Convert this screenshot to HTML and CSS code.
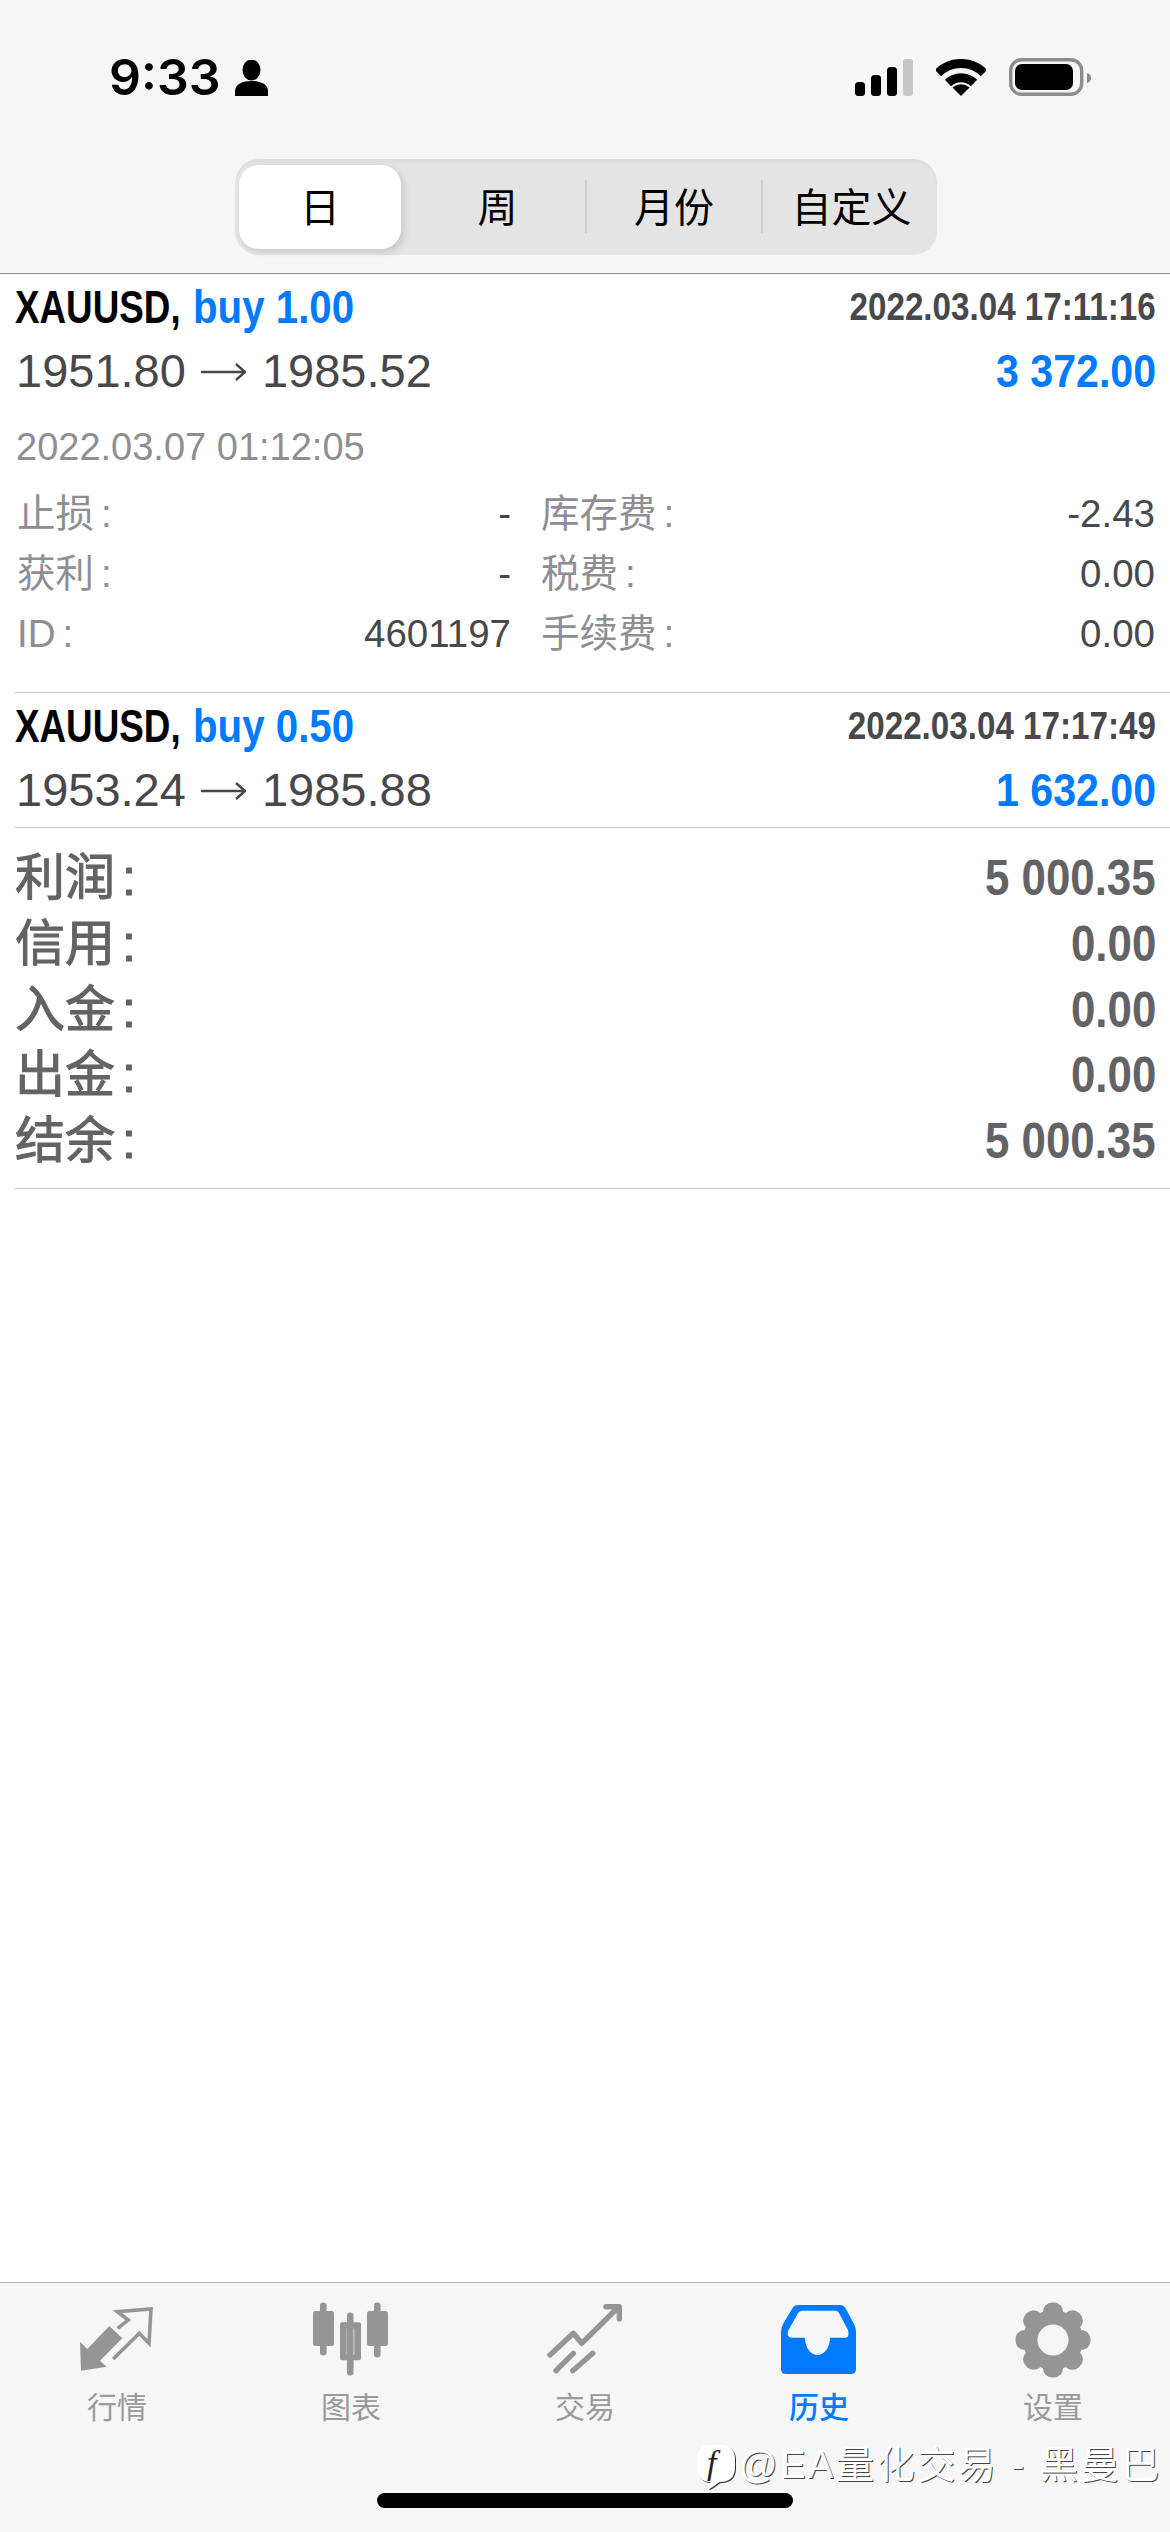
FILE: index.html
```html
<!DOCTYPE html>
<html>
<head>
  <title>历史</title>
  <link rel="stylesheet" href="styles.css">
</head>
<body>

<header class="top">
  <div class="status">
    <div class="status-left">
      <span class="clock">9:33</span>
      <svg class="person" width="33" height="36" viewBox="0 0 33 36">
        <ellipse cx="16.5" cy="10" rx="9" ry="10.5"/>
        <path d="M0 36V31C0 24 8 21 16.5 21S33 24 33 31V36Z"/>
      </svg>
    </div>
    <div class="status-right">
      <svg width="58" height="37" viewBox="0 0 58 37">
        <rect x="0" y="23" width="10" height="14" rx="3.5"/>
        <rect x="16" y="16" width="10" height="21" rx="3.5"/>
        <rect x="32" y="8" width="10" height="29" rx="3.5"/>
        <rect x="48" y="0" width="10" height="37" rx="3" fill="#c6c6c6"/>
      </svg>
      <svg width="50" height="37" viewBox="0 0 50 37">
        <path d="M2 14A32.5 32.5 0 0 1 48 14" fill="none" stroke="#000" stroke-width="9"/>
        <path d="M12 24A18.5 18.5 0 0 1 38 24" fill="none" stroke="#000" stroke-width="9"/>
        <path d="M25 37L16.5 28.5Q25 22 33.5 28.5Z"/>
      </svg>
      <svg width="82" height="38" viewBox="0 0 82 38">
        <rect x="1.7" y="1.7" width="71" height="34.6" rx="11" fill="none" stroke="#8c8c8c" stroke-width="3.4"/>
        <rect x="6" y="6" width="58" height="26" rx="7"/>
        <path d="M78 15Q82 16 82 20T78 25Z" fill="#8c8c8c"/>
      </svg>
    </div>
  </div>

  <div class="segment">
    <div class="seg-item seg-active">日</div>
    <div class="seg-item seg-week">周</div>
    <div class="seg-item seg-month">月份</div>
    <div class="seg-item seg-custom">自定义</div>
  </div>
</header>

<main class="list">
  <section class="trade">
    <div class="line">
      <div class="title"><span class="symbol">XAUUSD,</span><span class="side">buy 1.00</span></div>
      <span class="open-time">2022.03.04 17:11:16</span>
    </div>
    <div class="line">
      <span class="price">1951.80<svg class="arrow" width="45" height="18" viewBox="0 0 45 18"><path d="M0 9H44M35 1L44 9L35 17" fill="none" stroke="#48484a" stroke-width="2.4"/></svg>1985.52</span>
      <span class="profit">3 372.00</span>
    </div>
    <div class="close-time">2022.03.07 01:12:05</div>
    <div class="details">
      <div class="pair"><span class="key">止损<span class="colon">:</span></span><span>-</span></div>
      <div class="pair"><span class="key">库存费<span class="colon">:</span></span><span>-2.43</span></div>
      <div class="pair"><span class="key">获利<span class="colon">:</span></span><span>-</span></div>
      <div class="pair"><span class="key">税费<span class="colon">:</span></span><span>0.00</span></div>
      <div class="pair"><span class="key">ID<span class="colon">:</span></span><span>4601197</span></div>
      <div class="pair"><span class="key">手续费<span class="colon">:</span></span><span>0.00</span></div>
    </div>
  </section>

  <section class="trade trade-short">
    <div class="line">
      <div class="title"><span class="symbol">XAUUSD,</span><span class="side">buy 0.50</span></div>
      <span class="open-time">2022.03.04 17:17:49</span>
    </div>
    <div class="line">
      <span class="price">1953.24<svg class="arrow" width="45" height="18" viewBox="0 0 45 18"><path d="M0 9H44M35 1L44 9L35 17" fill="none" stroke="#48484a" stroke-width="2.4"/></svg>1985.88</span>
      <span class="profit">1 632.00</span>
    </div>
  </section>

  <section class="summary">
    <div class="sum-row"><span class="sum-key">利润<span class="colon">:</span></span><span class="sum-val">5 000.35</span></div>
    <div class="sum-row"><span class="sum-key">信用<span class="colon">:</span></span><span class="sum-val">0.00</span></div>
    <div class="sum-row"><span class="sum-key">入金<span class="colon">:</span></span><span class="sum-val">0.00</span></div>
    <div class="sum-row"><span class="sum-key">出金<span class="colon">:</span></span><span class="sum-val">0.00</span></div>
    <div class="sum-row"><span class="sum-key">结余<span class="colon">:</span></span><span class="sum-val">5 000.35</span></div>
  </section>
</main>

<footer class="tabbar">
  <nav class="tabs">
    <div class="tab">
      <svg width="90" height="80" viewBox="0 0 90 80">
        <path d="M8 41.7L15.3 49L37.3 26L50.3 38.3L28 60.7L34.7 66.7L9 70.7Z" fill="#959595"/>
        <path d="M45.7 28.3L56.3 20L45.3 11.7L79 9L77 43.3L67.3 33.3L41.3 59" fill="none" stroke="#959595" stroke-width="3.6"/>
      </svg>
      <span>行情</span>
    </div>
    <div class="tab">
      <svg width="90" height="80" viewBox="0 0 90 80" fill="#959595">
        <rect x="14" y="2.5" width="6.6" height="53" rx="3.3"/>
        <rect x="7" y="11" width="21" height="35" rx="2.5"/>
        <rect x="41" y="12.5" width="6.6" height="63" rx="3.3"/>
        <path fill-rule="evenodd" d="M36 22.3H53Q55 22.3 55 24.3V58.3Q55 60.3 53 60.3H36Q34 60.3 34 58.3V24.3Q34 22.3 36 22.3ZM41.5 28.3Q40.7 28.3 40.7 29.3V54Q40.7 55 41.5 55H47.5Q48.3 55 48.3 54V29.3Q48.3 28.3 47.5 28.3Z"/>
        <rect x="68" y="2.5" width="6.6" height="55" rx="3.3"/>
        <rect x="61" y="11" width="21" height="35" rx="2.5"/>
      </svg>
      <span>图表</span>
    </div>
    <div class="tab">
      <svg width="90" height="80" viewBox="0 0 90 80" fill="none" stroke="#959595" stroke-width="5.4" stroke-linecap="round" stroke-linejoin="round">
        <path d="M10 55L33.3 33.3L41.7 43.3L78 7.5"/>
        <path d="M66 6.7H79.3V19"/>
        <path d="M16 70.7L33.3 53.3"/>
        <path d="M32.7 70.7L52.7 53.3"/>
      </svg>
      <span>交易</span>
    </div>
    <div class="tab tab-active">
      <svg width="90" height="80" viewBox="0 0 90 80">
        <path fill="#007aff" fill-rule="evenodd" d="M24 5H66Q70 5 72 9L80 24Q82 28 82 32V69Q82 74 77 74H12Q7 74 7 69V32Q7 28 9 24L18 9Q20 5 24 5ZM29 10.7Q25 10.7 23.5 14L14 31Q12.5 37.7 18 37.7H31C31 48 37 55 43.5 55C50 55 56 48 56 37.7H71Q76 37.7 74 30L65.5 14Q64 10.7 61 10.7Z"/>
      </svg>
      <span>历史</span>
    </div>
    <div class="tab">
      <svg width="90" height="80" viewBox="-45 -40 90 80" fill="#959595">
        <circle r="30"/>
        <rect x="-10" y="-37.5" width="20" height="75" rx="9"/>
        <rect x="-10" y="-37.5" width="20" height="75" rx="9" transform="rotate(45)"/>
        <rect x="-10" y="-37.5" width="20" height="75" rx="9" transform="rotate(90)"/>
        <rect x="-10" y="-37.5" width="20" height="75" rx="9" transform="rotate(135)"/>
        <circle r="15.5" fill="#f6f6f6"/>
      </svg>
      <span>设置</span>
    </div>
  </nav>
  <div class="home-bar"></div>
</footer>

<div class="watermark">
  <svg width="40" height="46" viewBox="0 0 40 46">
    <path d="M14 1H26C34 1 39 7 39 14V24C39 33 33 38 25 38C21 38 18 44 12 45C14 42 15 39 14 38C6 38 1 32 1 24V14C1 7 6 1 14 1Z" fill="#333" transform="translate(1 1)"/>
    <path d="M14 1H26C34 1 39 7 39 14V24C39 33 33 38 25 38C21 38 18 44 12 45C14 42 15 39 14 38C6 38 1 32 1 24V14C1 7 6 1 14 1Z" fill="#fff"/>
    <text x="11" y="30" class="wm-f">f</text>
  </svg>
  <span class="wm-text">@EA量化交易 - 黑曼巴</span>
</div>

</body>
</html>
```

FILE: styles.css
```css
body {
  margin: 0;
  width: 1170px;
  height: 2532px;
  position: relative;
  overflow: hidden;
  display: flex;
  flex-direction: column;
  background: #fff;
  color: #48484a;
  font-family: "Liberation Sans", "Noto Sans CJK SC", sans-serif;
}

/* top area */
.top {
  height: 273px;
  background: #f6f6f6;
  border-bottom: 1px solid #8e8e8e;
  overflow: hidden;
}

.status {
  display: flex;
  justify-content: space-between;
  align-items: center;
  height: 38px;
  margin-top: 58px;
  padding: 0 79px 0 109px;
  color: #000;
}

.status-left {
  display: flex;
  align-items: center;
  gap: 14px;
}

.clock {
  font-family: Inter, sans-serif;
  font-size: 50px;
  font-weight: 600;
  line-height: 38px;
}

.person {
  margin-top: 2px;
}

.status-right {
  display: flex;
  align-items: center;
  gap: 23px;
}

.segment {
  display: flex;
  width: 702px;
  height: 96px;
  box-sizing: border-box;
  margin: 63px 0 0 235px;
  padding: 6px 4px;
  background: #e4e4e4;
  border-radius: 24px;
  box-shadow: inset 0 3px 3px rgba(0, 0, 0, 0.03);
}

.seg-item {
  display: flex;
  align-items: center;
  justify-content: center;
  box-sizing: border-box;
  padding-bottom: 5px;
  font-size: 40px;
  color: #000;
  position: relative;
}

.seg-active {
  width: 162px;
  background: #fff;
  border-radius: 20px;
  box-shadow: 3px 3px 7px rgba(0, 0, 0, 0.12);
}

.seg-week {
  width: 185px;
  padding-left: 8px;
}

.seg-month {
  width: 176px;
}

.seg-custom {
  width: 171px;
  padding-left: 8px;
}

.seg-month::before,
.seg-month::after {
  content: "";
  position: absolute;
  top: 15px;
  height: 53px;
  width: 2px;
  background: #cfcfcf;
}

.seg-month::before {
  left: -1px;
}

.seg-month::after {
  right: -1px;
}

/* trades */
.list {
  flex: 1;
}

.trade {
  margin-left: 15px;
  padding: 2px 14px 28px 0;
  border-bottom: 1px solid #c8c8c8;
}

.trade-short {
  padding-bottom: 6px;
}

.line {
  display: flex;
  justify-content: space-between;
  align-items: baseline;
  height: 63px;
  line-height: 63px;
}

/* no condensed bold is installed, so the bold text is squeezed */
.symbol,
.side,
.open-time,
.profit,
.sum-val {
  display: inline-block;
  font-weight: 700;
  white-space: nowrap;
}

.open-time,
.profit,
.sum-val {
  transform-origin: right center;
}

.symbol,
.side {
  font-size: 46px;
  transform-origin: left center;
}

.symbol {
  width: 178px;
  color: #000;
  transform: scaleX(0.8);
}

.side {
  color: #007aff;
  transform: scaleX(0.875);
}

.open-time {
  align-self: flex-start;
  font-size: 38px;
  line-height: 62px;
  transform: scaleX(0.873);
}

.price {
  display: flex;
  align-items: center;
  font-size: 47px;
  padding-left: 1px;
}

.arrow {
  margin: 2px 16px 0 15px;
}

.profit {
  font-size: 46px;
  color: #007aff;
  transform: scaleX(0.894);
}

.close-time {
  margin-top: 15px;
  padding-left: 1px;
  font-size: 38px;
  line-height: 60px;
  color: #8e8e93;
}

.details {
  display: grid;
  grid-template-columns: 494px 614px;
  column-gap: 30px;
  margin-top: 7px;
  padding-left: 2px;
  font-size: 38.5px;
  line-height: 60px;
}

.pair {
  display: flex;
  justify-content: space-between;
}

.key {
  color: #8e8e93;
}

.colon {
  margin-left: 7px;
}

.summary {
  margin-left: 15px;
  padding: 18px 14px 13px 0;
  border-bottom: 1px solid #c8c8c8;
  color: #636366;
}

.sum-row {
  display: flex;
  justify-content: space-between;
  height: 65.75px;
  line-height: 65.75px;
  font-size: 50px;
}

.sum-key {
  -webkit-text-stroke: 1px #636366;
}

.sum-val {
  transform: scaleX(0.877);
}

/* bottom tabs */
.tabbar {
  height: 249px;
  background: #f6f6f6;
  border-top: 1px solid #b4b4b4;
}

.tabs {
  display: grid;
  grid-template-columns: repeat(5, 1fr);
  padding-top: 17px;
}

.tab {
  display: flex;
  flex-direction: column;
  align-items: center;
  font-size: 30px;
  line-height: 40px;
  color: #9a9a9a;
}

.tab span {
  margin-top: 8px;
}

.tab-active {
  color: #007aff;
  font-weight: 500;
}

.home-bar {
  width: 416px;
  height: 15px;
  margin: 65px auto 0;
  background: #000;
  border-radius: 8px;
}

/* watermark sits over the tab bar */
.watermark {
  position: absolute;
  left: 696px;
  top: 2444px;
  display: flex;
  align-items: flex-start;
  gap: 3px;
}

.wm-text {
  font-size: 38px;
  line-height: 42px;
  letter-spacing: 2.6px;
  color: #fff;
  text-shadow: 1px 1px 0 #444;
  white-space: nowrap;
}

.wm-f {
  font-family: "Liberation Serif", serif;
  font-style: italic;
  font-size: 34px;
  fill: #222;
}
```
